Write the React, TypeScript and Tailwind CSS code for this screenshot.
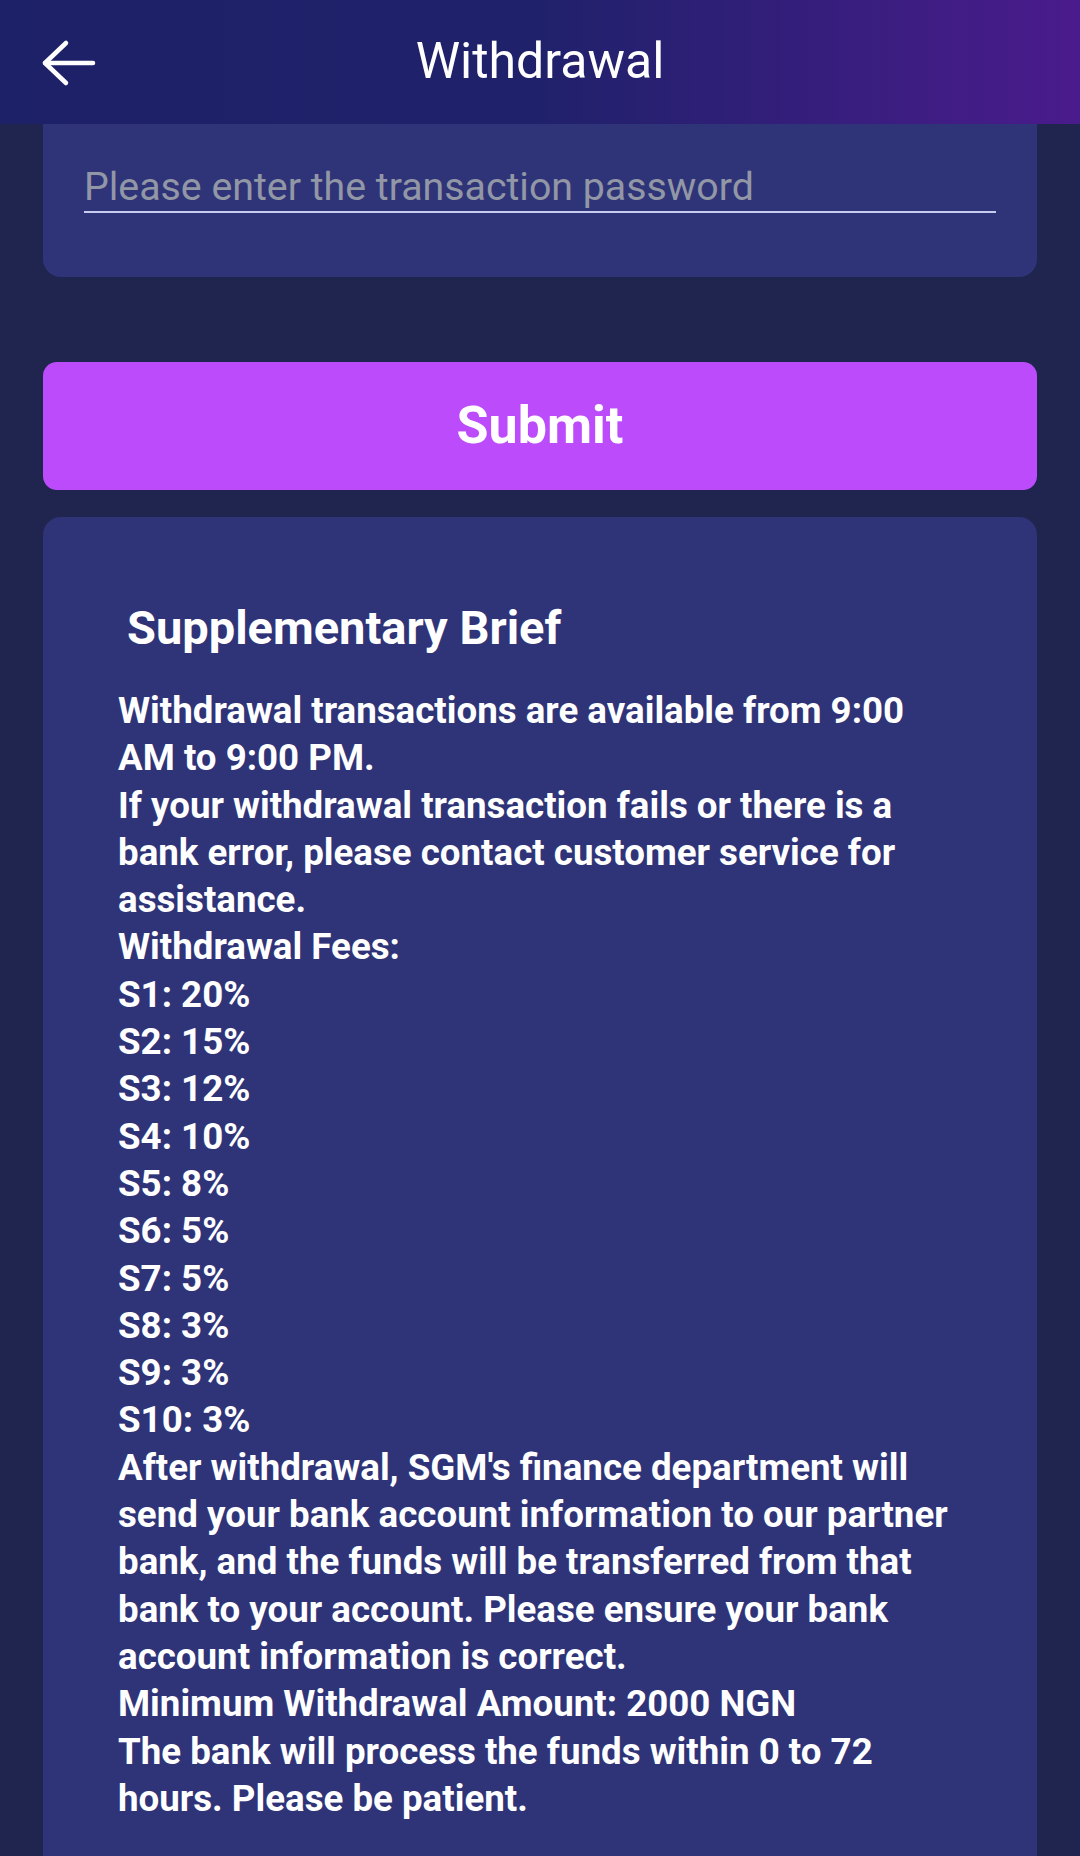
import { useState } from "react";

const NOTES = [
  "Withdrawal transactions are available from 9:00 AM to 9:00 PM.",
  "If your withdrawal transaction fails or there is a bank error, please contact customer service for assistance.",
  "Withdrawal Fees:",
  "S1: 20%",
  "S2: 15%",
  "S3: 12%",
  "S4: 10%",
  "S5: 8%",
  "S6: 5%",
  "S7: 5%",
  "S8: 3%",
  "S9: 3%",
  "S10: 3%",
  "After withdrawal, SGM's finance department will send your bank account information to our partner bank, and the funds will be transferred from that bank to your account. Please ensure your bank account information is correct.",
  "Minimum Withdrawal Amount: 2000 NGN",
  "The bank will process the funds within 0 to 72 hours. Please be patient.",
];

function BackArrow() {
  return (
    <svg width="58" height="50" viewBox="0 0 58 50" fill="none" stroke="white" strokeWidth="4.5" strokeLinecap="round" strokeLinejoin="round">
      <path d="M26 5 5 25l21 20" />
      <path d="M5 25h48" />
    </svg>
  );
}

export default function App() {
  const [password, setPassword] = useState("");

  return (
    <div className="min-h-screen bg-[#20254f] font-['Roboto',sans-serif] text-white">
      {/* Header */}
      <header className="h-[124px] flex items-center bg-[linear-gradient(90deg,#1d2167_0%,#20216b_50%,#4a1b8c_100%)]">
        <div className="w-[138px] pl-[40px] pt-[1px] flex items-center">
          <BackArrow />
        </div>
        <h1 className="flex-1 text-center text-[50px] leading-[60px] font-normal pb-[2px]">Withdrawal</h1>
        <div className="w-[138px]" />
      </header>

      <main className="px-[43px]">
        {/* Password card (scrolled, top hidden under header) */}
        <div className="bg-[#2f3479] rounded-b-[18px] pt-[38px] pb-[64px] px-[41px]">
          <input
            type="password"
            value={password}
            onChange={(e) => setPassword(e.target.value)}
            placeholder="Please enter the transaction password"
            className="w-full h-[51px] p-0 bg-transparent border-b-2 border-[#c8cbf0] text-[39.3px] leading-[46px] text-white placeholder:text-[#9297a6] outline-none"
          />
        </div>

        <button className="mt-[85px] w-full h-[128px] rounded-[14px] bg-[#bc4bfc] text-[52px] font-bold text-white">
          Submit
        </button>

        {/* Notes */}
        <div className="mt-[27px] bg-[#2f3479] rounded-[18px] pt-[83px] pb-[100px] pl-[75px] pr-[80px]">
          <h2 className="ml-[9px] text-[47px] leading-[56px] font-bold">Supplementary Brief</h2>
          <div className="mt-[31px] text-[36.7px] leading-[47.3px] font-bold">
            {NOTES.map((line) => (
              <p key={line}>{line}</p>
            ))}
          </div>
        </div>
      </main>
    </div>
  );
}
